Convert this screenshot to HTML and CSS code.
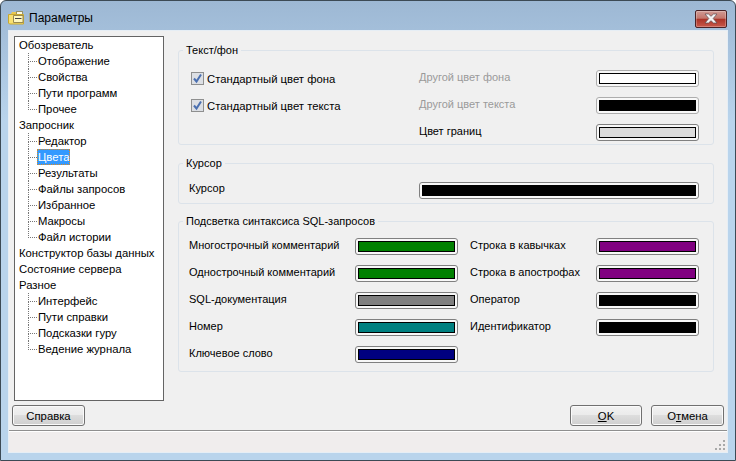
FILE: index.html
```html
<!DOCTYPE html>
<html lang="ru">
<head>
<meta charset="utf-8">
<title>Параметры</title>
<link rel="stylesheet" href="styles.css">
</head>
<body>
<div class="window">
  <div class="titlebar">
    <svg class="app-icon" width="17" height="15" viewBox="0 0 17 15">
      <path d="M1 4h2l1-2h4l1-1h5.500v3z" fill="#e8c850"/>
      <path d="M8.500 1.500h6v3h-6z" fill="#fffbe0" stroke="#5a5a40" stroke-width=".6"/>
      <path d="M0.500 4.500h15v9.500h-14l-1-1z" fill="#f8e070" stroke="#c8a830"/>
      <path d="M5.500 5.500h9.500v7H5.500z" fill="#fff8c0" stroke="#9a8a50"/>
      <path d="M7 8.500h6.500" stroke="#444" fill="none"/>
    </svg>
    <span class="title">Параметры</span>
    <div class="close">
      <svg width="16" height="11" viewBox="0 0 16 11">
        <path d="M2 1h3.500L8 3.300 10.500 1H14l-3.800 4.500L14 10h-3.500L8 7.700 5.500 10H2l3.800-4.500z" fill="#f4f4f4" stroke="#5a4a50" stroke-width=".7"/>
      </svg>
    </div>
  </div>

  <div class="client">
    <div class="main">
      <ul class="tree">
        <li>Обозреватель
          <ul>
            <li>Отображение</li>
            <li>Свойства</li>
            <li>Пути программ</li>
            <li>Прочее</li>
          </ul>
        </li>
        <li>Запросник
          <ul>
            <li>Редактор</li>
            <li><span class="selected">Цвета</span></li>
            <li>Результаты</li>
            <li>Файлы запросов</li>
            <li>Избранное</li>
            <li>Макросы</li>
            <li>Файл истории</li>
          </ul>
        </li>
        <li>Конструктор базы данных</li>
        <li>Состояние сервера</li>
        <li>Разное
          <ul>
            <li>Интерфейс</li>
            <li>Пути справки</li>
            <li>Подсказки гуру</li>
            <li>Ведение журнала</li>
          </ul>
        </li>
      </ul>

      <div class="panels">
        <fieldset class="group group-text">
          <legend>Текст/фон</legend>
          <div class="text-grid">
            <label class="check">
              <span class="box"><svg width="11" height="11" viewBox="0 0 11 11"><path d="M2 5.500l2.500 3L9 1.500" fill="none" stroke="#4a6fb0" stroke-width="2"/></svg></span>
              Стандартный цвет фона
            </label>
            <span class="muted">Другой цвет фона</span>
            <div class="swatch swatch-off"><i class="c-white"></i></div>

            <label class="check">
              <span class="box"><svg width="11" height="11" viewBox="0 0 11 11"><path d="M2 5.500l2.500 3L9 1.500" fill="none" stroke="#4a6fb0" stroke-width="2"/></svg></span>
              Стандартный цвет текста
            </label>
            <span class="muted">Другой цвет текста</span>
            <div class="swatch swatch-off"><i class="c-black"></i></div>

            <span></span>
            <span>Цвет границ</span>
            <div class="swatch"><i class="c-light"></i></div>
          </div>
        </fieldset>

        <fieldset class="group group-cursor">
          <legend>Курсор</legend>
          <div class="cursor-row">
            <span>Курсор</span>
            <div class="swatch swatch-wide"><i class="c-black"></i></div>
          </div>
        </fieldset>

        <fieldset class="group group-syntax">
          <legend>Подсветка синтаксиса SQL-запросов</legend>
          <div class="syntax-grid">
            <span>Многострочный комментарий</span>
            <div class="swatch"><i class="c-green"></i></div>
            <span>Строка в кавычках</span>
            <div class="swatch"><i class="c-purple"></i></div>

            <span>Однострочный комментарий</span>
            <div class="swatch"><i class="c-green"></i></div>
            <span>Строка в апострофах</span>
            <div class="swatch"><i class="c-purple"></i></div>

            <span>SQL-документация</span>
            <div class="swatch"><i class="c-gray"></i></div>
            <span>Оператор</span>
            <div class="swatch"><i class="c-black"></i></div>

            <span>Номер</span>
            <div class="swatch"><i class="c-teal"></i></div>
            <span>Идентификатор</span>
            <div class="swatch"><i class="c-black"></i></div>

            <span>Ключевое слово</span>
            <div class="swatch"><i class="c-navy"></i></div>
          </div>
        </fieldset>
      </div>
    </div>

    <div class="buttons">
      <button class="btn">Справка</button>
      <span class="spacer"></span>
      <button class="btn btn-ok"><u>O</u>K</button>
      <button class="btn">О<u>т</u>мена</button>
    </div>

    <div class="statusbar">
      <svg class="grip" width="11" height="11" viewBox="0 0 11 11" fill="#a8a8a8">
        <path d="M8 0h2v2H8zM4 4h2v2H4zM8 4h2v2H8zM0 8h2v2H0zM4 8h2v2H4zM8 8h2v2H8z"/>
      </svg>
    </div>
  </div>
</div>
</body>
</html>
```

FILE: styles.css
```css
/* Base */
*,*::before,*::after{box-sizing:border-box}
html,body{margin:0;padding:0}
body{
  width:736px;height:461px;overflow:hidden;
  font-family:"Liberation Sans",Arial,sans-serif;
  font-size:11px;color:#000;
}
ul{list-style:none;margin:0;padding:0}

/* Window frame */
.window{
  width:736px;height:461px;
  display:flex;flex-direction:column;
  padding:0 7px 7px 7px;
  background:linear-gradient(180deg,#9db8d4 0,#a6c1dc 40px,#b9d4ec 120px,#b9d4ec 100%);
  border:1px solid #3c4a55;
  border-radius:6px 6px 0 0;
}
.titlebar{
  height:29px;flex:none;
  display:flex;align-items:center;
}
.app-icon{margin-top:3px}
.title{margin-left:4px;margin-top:4px;font-size:12px;color:#000}
.close{
  margin-left:auto;margin-right:1px;margin-top:6px;
  width:32px;height:18px;
  display:flex;align-items:center;justify-content:center;
  border:1px solid #4a2226;border-radius:2px;
  background:linear-gradient(180deg,#d09a94 0,#c4766c 45%,#ab3428 52%,#c8584a 100%);
  box-shadow:inset 0 0 0 1px rgba(255,255,255,.25);
}

/* Client area */
.client{
  flex:1;min-height:0;
  display:flex;flex-direction:column;
  background:#f0f0f0;
  border:1px solid #e6eef5;
}
.main{display:flex;padding:5px 0 0 5px;height:366px}

/* Tree */
.tree{
  width:150px;height:365px;flex:none;
  background:#fff;border:1px solid #646464;
  padding-left:4px;
  font-size:11.3px;
  line-height:16px;
  white-space:nowrap;
}
.tree ul{padding-left:19px}
.tree ul li{position:relative}
.tree ul li::before{
  content:"";position:absolute;left:-10px;top:0;
  width:9px;height:9px;
  border-left:1px dotted #777;border-bottom:1px dotted #777;
}
.tree ul li:not(:last-child)::after{
  content:"";position:absolute;left:-10px;top:8px;height:8px;
  border-left:1px dotted #777;
}
.selected{
  display:inline-block;
  background:#3399ff;color:#fff;
  padding:0 1px;margin-left:-1px;
  outline:1px dotted #e08a20;outline-offset:-1px;
}

/* Right panels */
.panels{
  width:536px;margin-left:14px;
  display:flex;flex-direction:column;
}
.group{
  margin:0;padding:0;min-width:0;
  border:1px solid #dce3ea;border-radius:3px;
}
.group legend{padding:0 3px;margin-left:4px;line-height:14px}
.group-text{margin-top:7px;height:102px}
.group-cursor{margin-top:11px;height:48px}
.group-syntax{margin-top:10px;height:158px}

.muted{color:#9a9a9a}

.text-grid{
  display:grid;
  grid-template-columns:228px 177px 103px;
  grid-auto-rows:21px;
  row-gap:6px;
  align-items:center;
  padding:9px 0 0 12px;
}
.text-grid .swatch{align-self:end}
.check{
  display:flex;align-items:center;gap:3px;
  font-size:11.3px;
  align-self:end;margin-bottom:2px;
}
.box{
  width:13px;height:13px;flex:none;
  display:flex;align-items:center;justify-content:center;
  border:1px solid #8e8f8f;
  background:#dcdfe4;
}

.cursor-row{
  display:flex;align-items:center;justify-content:space-between;
  padding:7px 14px 0 10px;
}
.cursor-row .swatch{margin-top:5px}

.syntax-grid{
  display:grid;
  grid-template-columns:166px 103px 138px 103px;
  grid-auto-rows:21px;
  row-gap:6px;
  align-items:center;
  padding:6px 0 0 10px;
}
.syntax-grid .swatch{align-self:end}
.syntax-grid > :nth-child(4n+3){margin-left:12px}

/* Color buttons */
.swatch{
  height:17px;
  padding:2px;
  background:#f8f8f8;
  border:1px solid #808080;border-radius:3px;
}
.swatch-off{border-color:#adadad}
.swatch i{display:block;height:100%;border:1px solid #000}
.swatch-wide{width:280px}
.c-white{background:#fff}
.c-black{background:#000}
.c-light{background:#dcdcdc}
.c-green{background:#008000}
.c-purple{background:#800080}
.c-gray{background:#808080}
.c-teal{background:#008080}
.c-navy{background:#000080}

/* Bottom buttons */
.buttons{
  display:flex;align-items:center;gap:9px;
  padding:8px 3px 0 3px;
}
.spacer{flex:1}
.btn{
  width:73px;height:21px;padding:0;
  font:inherit;font-size:11.3px;color:#000;
  border:1px solid #707070;border-radius:3px;
  background:linear-gradient(180deg,#f2f2f2 0,#ebebeb 45%,#dddddd 50%,#cfcfcf 100%);
  box-shadow:inset 0 0 0 1px #fafafa;
}
.btn-ok{width:72px}

/* Status bar */
.statusbar{
  margin-top:4px;flex:1;
  display:flex;align-items:flex-end;justify-content:flex-end;
  padding:0 1px 1px 0;
  background:#f0eded;
  border-top:1px solid #8f8f8f;
  box-shadow:inset 0 1px 0 #fff;
}
```
